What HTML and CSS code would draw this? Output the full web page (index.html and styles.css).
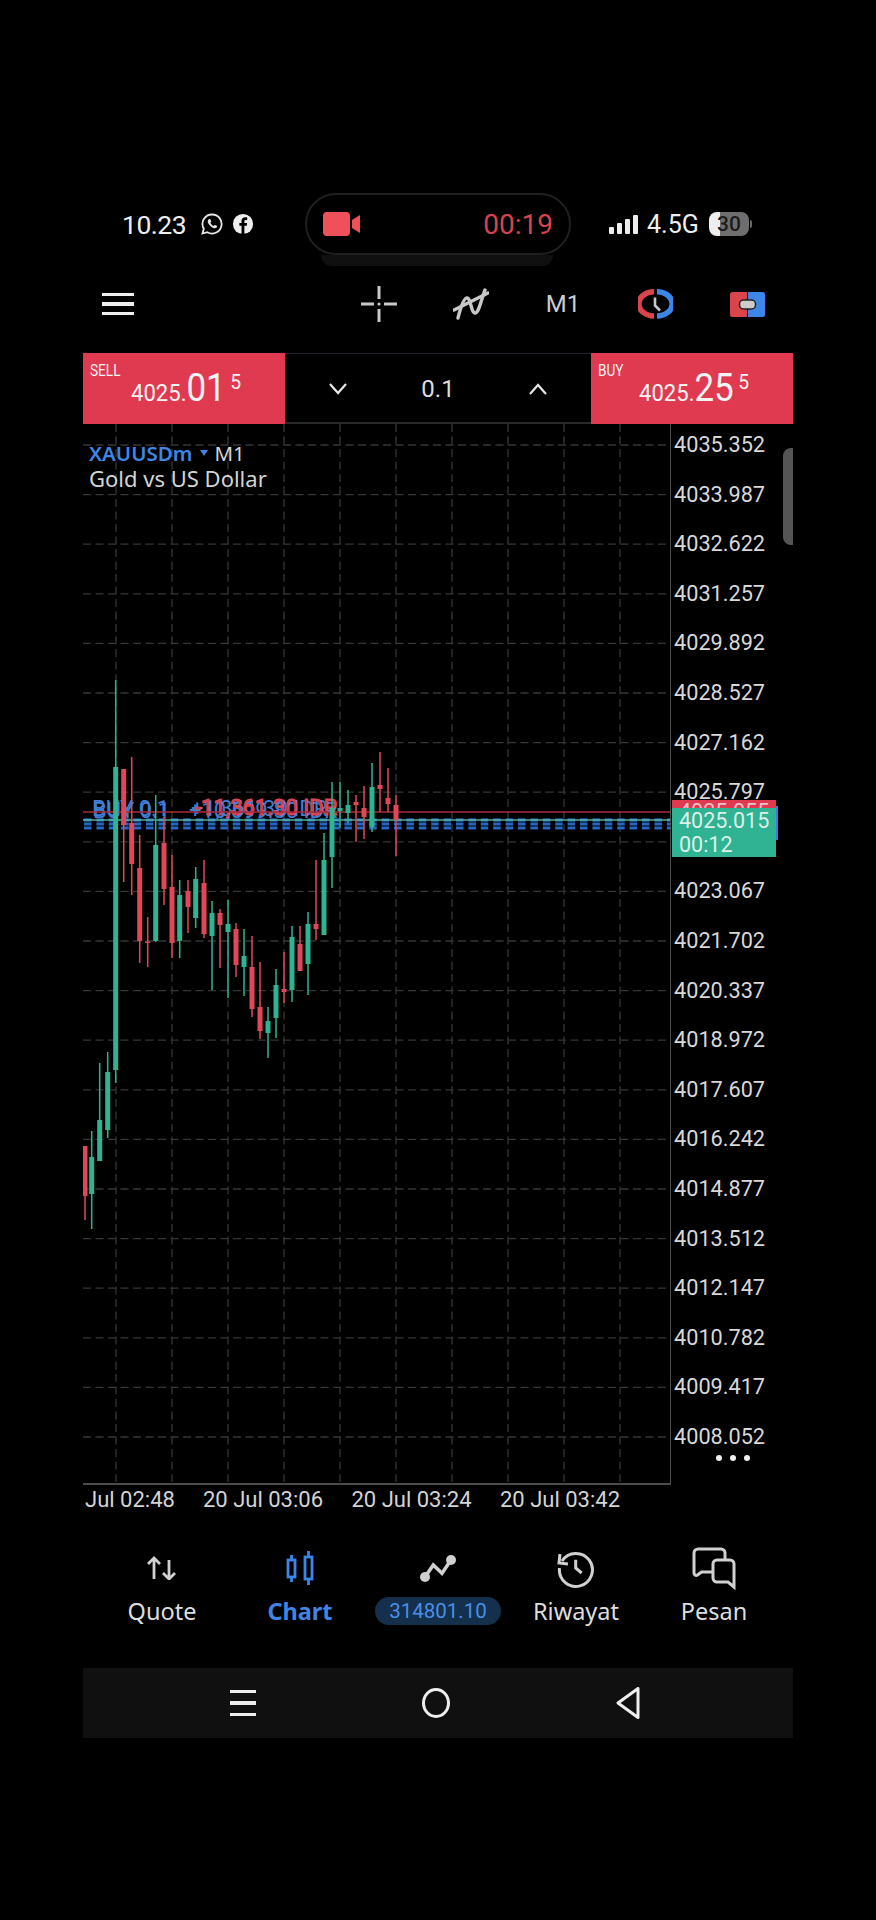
FILE: index.html
```html
<!DOCTYPE html>
<html lang="en">
<head>
  <meta charset="UTF-8">
  <title>XAUUSDm Chart</title>
  <link rel="stylesheet" href="styles.css">
</head>
<body>
  <div class="phone">

    <div class="statusbar">
      <div class="status-left">
        <span class="clock">10.23</span>
        <svg class="ic-wa" viewBox="0 0 24 24"><path d="M12 2.5a9.5 9.5 0 0 0-8.2 14.3L2.5 21.5l4.8-1.3A9.5 9.5 0 1 0 12 2.5z" fill="none" stroke="#e6e6e6" stroke-width="1.8"/><path d="M8.6 7.4c-.6.6-1 1.5-.8 2.6.4 2.2 3.6 5.7 6.3 6.3 1.1.2 2-.2 2.6-.8.4-.5.5-1 .4-1.4l-2-1c-.3-.1-.6 0-.8.2l-.6.7c-1.4-.6-2.7-1.8-3.3-3.2l.6-.7c.2-.2.3-.5.2-.8l-.9-2c-.5-.2-1.3-.4-1.7.1z" fill="#e6e6e6"/></svg>
        <svg class="ic-fb" viewBox="0 0 24 24"><circle cx="12" cy="12" r="11" fill="#eee"/><path d="M13.5 23v-9.2h2.6l.4-3h-3V9c0-.9.3-1.5 1.5-1.5h1.6V4.8c-.3 0-1.2-.1-2.3-.1-2.3 0-3.9 1.4-3.9 4v2.1H8v3h2.4V23z" fill="#000"/></svg>
      </div>
      <div class="rec-pill">
        <svg class="ic-cam" viewBox="0 0 37 24"><rect width="27" height="24" rx="4" fill="#f0505a"/><path d="M29 8l8-5v18l-8-5z" fill="#f0505a"/></svg>
        <span class="rec-time">00:19</span>
      </div>
      <div class="status-right">
        <div class="signal"><i class="b1"></i><i class="b2"></i><i class="b3"></i><i class="b4"></i></div>
        <span class="net">4.5G</span>
        <div class="battery"><span>30</span></div>
        <i class="battery-tip"></i>
      </div>
    </div>

    <div class="toolbar">
      <div class="hamburger"><i></i><i></i><i></i></div>
      <div class="tools">
        <div class="tool">
          <svg width="36" height="36" viewBox="0 0 36 36" fill="none" stroke="#c8c8c8" stroke-width="3"><path d="M0 18h13M23 18h13M18 0v13M18 23v13"/><circle cx="18" cy="18" r="1.6" fill="#c8c8c8" stroke="none"/></svg>
        </div>
        <div class="tool">
          <svg width="36" height="32" viewBox="0 0 36 32" fill="none" stroke="#c8c8c8" stroke-width="3.4" stroke-linecap="round"><path d="M5 30C8 18 11 10 14 10c4 0 4 15 8 15 4 0 6-13 10-23"/><path d="M1 22L35 5"/></svg>
        </div>
        <div class="tool tool-text">M1</div>
        <div class="tool">
          <svg width="35" height="30" viewBox="0 0 35 30" fill="none" stroke-width="5.5"><path d="M16 2.700A15 12 0 0 0 16 27" stroke="#d9454a"/><path d="M19 2.700A15 12 0 0 1 19 27" stroke="#3b86e8"/><path d="M17 8.500v8l5 5" stroke="#c8c8c8" stroke-width="2.6"/></svg>
        </div>
        <div class="tool">
          <svg width="35" height="25" viewBox="0 0 35 25"><path d="M2.500 0H17v25H2.500A2.500 2.500 0 0 1 0 22.500v-20A2.500 2.500 0 0 1 2.500 0z" fill="#d9454a"/><path d="M18 0h14.500A2.500 2.500 0 0 1 35 2.500v20a2.500 2.500 0 0 1-2.500 2.500H18z" fill="#3b86e8"/><rect x="9.500" y="8" width="16" height="9" rx="4" fill="#ccc" stroke="#222" stroke-width="1.500"/></svg>
        </div>
      </div>
    </div>

    <div class="tradebar">
      <div class="quote-btn">
        <div class="side">SELL</div>
        <div class="price"><span class="p-small">4025.</span><span class="p-big">01</span><span class="p-sup">5</span></div>
      </div>
      <div class="volume">
        <svg width="18" height="12" viewBox="0 0 18 12" fill="none" stroke="#e6e6e6" stroke-width="2.2"><path d="M1 1l8 9 8-9"/></svg>
        <span>0.1</span>
        <svg width="18" height="12" viewBox="0 0 18 12" fill="none" stroke="#e6e6e6" stroke-width="2.2"><path d="M1 11l8-9 8 9"/></svg>
      </div>
      <div class="quote-btn">
        <div class="side">BUY</div>
        <div class="price"><span class="p-small">4025.</span><span class="p-big">25</span><span class="p-sup">5</span></div>
      </div>
    </div>

    <div class="chart">
      <div class="plot">
        <svg class="plot-svg" width="587" height="1059" viewBox="83 424 587 1059">
          <!-- grid -->
          <path class="grid" d="M83 445H670M83 494.6H670M83 544.2H670M83 593.8H670M83 643.4H670M83 693H670M83 742.6H670M83 792.2H670M83 841.8H670M83 891.4H670M83 941H670M83 990.6H670M83 1040.2H670M83 1089.8H670M83 1139.4H670M83 1189H670M83 1238.6H670M83 1288.2H670M83 1337.8H670M83 1387.4H670M83 1437H670"/>
          <path class="grid" d="M116 424V1483M172 424V1483M228 424V1483M284 424V1483M340 424V1483M396 424V1483M452 424V1483M508 424V1483M564 424V1483M620 424V1483"/>

          <!-- open positions, they stack on top of each other -->
          <text class="order blue" x="92" y="816">BUY 0.1</text>
          <text class="order blue" x="93" y="818">BUY 0.1</text>
          <text class="order blue" x="189" y="818">+10,599.80 IDR</text>
          <text class="order blue" x="191" y="816">+1,361.30 IDR</text>
          <text class="order red" x="195" y="815">-11,361.30 IDR</text>

          <path class="dashes" d="M84 820H670"/>
          <path class="dashes dim" d="M84 824H670M84 828H670"/>
          <path class="line-ask" d="M83 812H670"/>
          <path class="line-bid" d="M83 820H670"/>

          <!-- candles -->
          <path class="wick green" d="M115.7 680V1083M91.7 1131V1229M99.7 1063V1160M107.7 1052V1138M155.7 795V942M179.7 880V958M195.7 867V928M212 901V990M228 900V998M244 929V996M268 1007V1058M276 969V1038M292 926V1002M308 912V995M324 833V935M332 782V888M340 782V828M348 790V823M372 763V832"/>
          <path class="body green" d="M115.7 767V1070M91.7 1157V1194M99.7 1120V1161M107.7 1072V1130M155.7 845V941M179.7 895V941M195.7 879V918M212 913V936M228 924V932M244 956V967M268 1021V1033M276 985V1018M292 937V990M308 924V964M324 860V935M332 808V857M340 808V811M348 805V813M372 787V827"/>
          <path class="wick red" d="M85 1146V1220M123.7 769V882M131.7 757V895M139.7 835V963M147.7 917V967M164 817V905M172 855V958M188 880V933M204 860V938M220 909V968M236 923V977M252 936V1017M260 962V1039M284 952V1003M300 926V971M316 860V940M356 795V842M364 786V839M380 752V812M388 768V812M396 795V856"/>
          <path class="body red" d="M85 1146V1196M123.7 769V825M131.7 823V864M139.7 868V941M147.7 941.500V943M164 843V889M172 887V943M188 891V907M204 883V934M220 913V925M236 929V965M252 967V1009M260 1007V1031M284 989V992M300 944V971M316 924V929M356 802V805M364 808V817M380 785V789M388 798V804M396 805V820"/>
        </svg>
        <div class="symbol">
          <div class="symbol-row"><span class="symbol-name">XAUUSDm</span><i class="symbol-arrow"></i><span>M1</span></div>
          <div class="symbol-desc">Gold vs US Dollar</div>
        </div>
      </div>

      <div class="axis">
        <span>4035.352</span><span>4033.987</span><span>4032.622</span><span>4031.257</span><span>4029.892</span><span>4028.527</span><span>4027.162</span><span>4025.797</span><span>4024.432</span><span>4023.067</span><span>4021.702</span><span>4020.337</span><span>4018.972</span><span>4017.607</span><span>4016.242</span><span>4014.877</span><span>4013.512</span><span>4012.147</span><span>4010.782</span><span>4009.417</span><span>4008.052</span>
      </div>

      <div class="tag-ask">4025.055</div>
      <i class="tag-edge"></i>
      <div class="tag-bid">4025.015<br>00:12</div>
      <i class="scroll-handle"></i>
      <div class="more-dots"><i></i><i></i><i></i></div>
    </div>

    <div class="timeaxis">
      <span class="first">Jul 02:48</span>
      <span>20 Jul 03:06</span>
      <span>20 Jul 03:24</span>
      <span>20 Jul 03:42</span>
    </div>

    <div class="tabs">
      <div class="tab">
        <div class="tab-icon"><svg width="30" height="24" viewBox="0 0 30 24" fill="none" stroke="#d0d0d0" stroke-width="2.8"><path d="M7 23V2M1 8l6-6 6 6"/><path d="M22 4v19M16 17l6 6 6-6"/></svg></div>
        <span>Quote</span>
      </div>
      <div class="tab active">
        <div class="tab-icon"><svg width="28" height="36" viewBox="0 0 28 36" fill="none" stroke="#3b86e8" stroke-width="2.8"><rect x="2" y="10" width="7" height="17"/><path d="M5.500 5v5M5.500 27v5"/><rect x="19" y="7" width="7" height="22"/><path d="M22.500 1v6M22.500 29v6"/></svg></div>
        <span>Chart</span>
      </div>
      <div class="tab">
        <div class="tab-icon"><svg width="36" height="30" viewBox="0 0 36 30" fill="none" stroke="#d0d0d0" stroke-width="3.5"><path d="M5 24l8.300-12 8.700 8.300L31 7"/><circle cx="5" cy="24" r="5" fill="#d0d0d0" stroke="none"/><circle cx="31" cy="7" r="5" fill="#d0d0d0" stroke="none"/></svg></div>
        <span class="balance">314801.10</span>
      </div>
      <div class="tab">
        <div class="tab-icon"><svg width="40" height="40" viewBox="0 0 40 40" fill="none" stroke="#d0d0d0" stroke-width="3"><path d="M6 13A16.500 16.500 0 1 1 3.500 20"/><path d="M4 6l-1 9 9 1"/><path d="M19.700 11.700V20l6 5"/></svg></div>
        <span>Riwayat</span>
      </div>
      <div class="tab">
        <div class="tab-icon"><svg width="46" height="46" viewBox="0 0 46 46" fill="none" stroke="#d0d0d0" stroke-width="3"><path d="M34 14V8a4 4 0 0 0-4-4H7a4 4 0 0 0-4 4v20c0 2 2 3 3.500 2l4-3h11"/><path d="M26 15h13a4 4 0 0 1 4 4v23l-6-5H26a4 4 0 0 1-4-4V19a4 4 0 0 1 4-4z"/></svg></div>
        <span>Pesan</span>
      </div>
    </div>

    <div class="sysnav">
      <div class="sys-menu"><i></i><i></i><i></i></div>
      <i class="sys-home"></i>
      <svg width="24" height="32" viewBox="0 0 24 32" fill="none" stroke="#eee" stroke-width="3" stroke-linejoin="round"><path d="M22 1.500v29L2 16z"/></svg>
    </div>

  </div>
</body>
</html>
```

FILE: styles.css
```css
* {
  box-sizing: border-box;
}

body {
  margin: 0;
  background: #000;
  font-family: Roboto, sans-serif;
  color: #ddd;
}

.phone {
  width: 710px;
  margin-left: 83px;
  padding-top: 193px;
}

/* status bar */
.statusbar {
  display: flex;
  height: 62px;
}

.status-left {
  width: 222px;
  padding-left: 39px;
  display: flex;
  align-items: center;
}

.clock {
  font-size: 26.500px;
  color: #eee;
  width: 78px;
  letter-spacing: -0.5px;
}

.ic-wa {
  width: 24px;
  height: 24px;
}

.ic-fb {
  width: 22px;
  height: 22px;
  margin-left: 8px;
}

.rec-pill {
  position: relative;
  width: 266px;
  border: 2px solid #1f1f1f;
  border-radius: 31px;
  padding: 0 16px;
  display: flex;
  align-items: center;
  justify-content: space-between;
}

.rec-pill::after {
  content: "";
  position: absolute;
  left: 14px;
  right: 16px;
  top: 60px;
  height: 11px;
  background: #101010;
  border-radius: 0 0 14px 14px;
}

.ic-cam {
  width: 37px;
  height: 24px;
}

.rec-time {
  font-size: 28px;
  color: #d8434f;
}

.status-right {
  padding-left: 38px;
  display: flex;
  align-items: center;
}

.signal {
  display: flex;
  align-items: flex-end;
  gap: 3px;
  height: 19px;
}

.signal i {
  width: 5px;
  background: #eee;
  border-radius: 1px;
}

.signal .b1 { height: 7px; }
.signal .b2 { height: 11px; }
.signal .b3 { height: 15px; }
.signal .b4 { height: 19px; }

.net {
  font-size: 25px;
  color: #eee;
  margin-left: 9px;
  width: 62px;
}

.battery {
  width: 40px;
  height: 24px;
  border-radius: 8px;
  background: linear-gradient(90deg, #eee 0 28%, #6e6e6e 28%);
  font-size: 21px;
  font-weight: 500;
  color: #1c1c1c;
  text-align: center;
  line-height: 24px;
}

.battery-tip {
  width: 2px;
  height: 8px;
  margin-left: 1px;
  background: #666;
  border-radius: 0 2px 2px 0;
}

/* toolbar */
.toolbar {
  height: 98px;
  padding-left: 19px;
  display: flex;
  align-items: center;
  justify-content: space-between;
}

.hamburger {
  width: 32px;
  display: flex;
  flex-direction: column;
  gap: 6px;
}

.hamburger i {
  height: 3.500px;
  background: #eee;
}

.tools {
  display: flex;
}

.tool {
  width: 92px;
  display: flex;
  align-items: center;
  justify-content: center;
}

.tool-text {
  font-size: 24px;
  color: #ccc;
}

/* sell / volume / buy */
.tradebar {
  display: flex;
  height: 71px;
}

.quote-btn {
  width: 202px;
  background: #e03a50;
  padding: 8px 0 0 7px;
  color: #f4f4f4;
}

.side {
  font-size: 16px;
  line-height: 20px;
  transform: scaleX(0.85);
  transform-origin: left;
}

.price {
  margin-left: 41px;
  margin-top: -15px;
  white-space: nowrap;
  transform: scaleX(0.92);
  transform-origin: left;
}

.p-small {
  font-size: 24px;
}

.p-big {
  font-size: 38px;
}

.p-sup {
  font-size: 21px;
  vertical-align: 12px;
  margin-left: 5px;
}

.volume {
  width: 306px;
  padding: 2px 44px 0;
  border-top: 1px solid #22222c;
  border-bottom: 2px solid #2a2a2a;
  display: flex;
  align-items: center;
  justify-content: space-between;
  font-size: 24px;
  color: #ddd;
}

/* chart */
.chart {
  position: relative;
  display: flex;
  height: 1061px;
}

.plot {
  position: relative;
  width: 588px;
  height: 1061px;
  border-right: 1.500px solid #4c4c4c;
  border-bottom: 2px solid #4c4c4c;
}

.plot-svg {
  display: block;
}

.grid {
  fill: none;
  stroke: #363636;
  stroke-width: 1.300;
  stroke-dasharray: 8 4.500;
}

.order {
  font-size: 22px;
  font-family: Roboto, sans-serif;
}

.order.blue {
  fill: #3f7fd6;
}

.order.red {
  fill: #c9384a;
}

.dashes {
  fill: none;
  stroke: #3182ea;
  stroke-width: 3;
  stroke-dasharray: 7.500 4.900;
}

.dashes.dim {
  stroke: #2567c4;
}

.line-ask {
  stroke: #a82a38;
  stroke-width: 1.500;
}

.line-bid {
  stroke: #4fae9a;
  stroke-width: 1.500;
}

.wick {
  fill: none;
  stroke-width: 1.500;
}

.body {
  fill: none;
  stroke-width: 5;
}

.green {
  stroke: #2fb392;
}

.red {
  stroke: #e0485a;
}

.symbol {
  position: absolute;
  left: 6px;
  top: 16px;
  font-family: "Noto Sans", sans-serif;
  font-size: 20.500px;
  line-height: 26px;
  color: #d4d4d4;
}

.symbol-row {
  display: flex;
  align-items: center;
}

.symbol-name {
  color: #3f86e4;
  font-weight: 600;
}

.symbol-arrow {
  width: 0;
  height: 0;
  margin: 0 6px 0 8px;
  border-left: 4px solid transparent;
  border-right: 4px solid transparent;
  border-top: 6px solid #3f86e4;
}

.symbol-desc {
  font-size: 22px;
  line-height: 24px;
}

.axis {
  flex: 1;
  padding: 9px 0 0 3px;
  display: flex;
  flex-direction: column;
  gap: 25.600px;
  font-size: 21.700px;
  line-height: 24px;
  color: #d8d8d8;
}

.tag-ask {
  position: absolute;
  left: 589px;
  top: 376px;
  width: 104px;
  height: 14px;
  padding-left: 7px;
  overflow: hidden;
  background: #e03a50;
  font-size: 21.500px;
  line-height: 24px;
  color: #f0c0c8;
}

.tag-edge {
  position: absolute;
  left: 693px;
  top: 382px;
  width: 2px;
  height: 34px;
  background: #2f7fe6;
}

.tag-bid {
  position: absolute;
  left: 589px;
  top: 384px;
  width: 104px;
  height: 49px;
  padding: 1px 0 0 7px;
  background: #2fb392;
  font-size: 21.500px;
  line-height: 24px;
  color: #dff0ea;
}

.scroll-handle {
  position: absolute;
  right: 0;
  top: 24px;
  width: 10px;
  height: 97px;
  background: #555;
  border-radius: 8px 0 0 8px;
}

.more-dots {
  position: absolute;
  left: 633px;
  top: 1031px;
  display: flex;
  gap: 8px;
}

.more-dots i {
  width: 6px;
  height: 6px;
  border-radius: 50%;
  background: #eee;
}

/* date row */
.timeaxis {
  display: flex;
  height: 30px;
  padding-left: 2px;
  font-size: 22px;
  line-height: 30px;
  color: #d4d4d4;
  white-space: nowrap;
}

.timeaxis span {
  width: 148.500px;
}

.timeaxis .first {
  width: 118px;
}

/* bottom tabs */
.tabs {
  display: flex;
  padding: 28px 0 0 10px;
}

.tab {
  width: 138px;
  display: flex;
  flex-direction: column;
  align-items: center;
  gap: 4px;
  font-family: "Noto Sans", sans-serif;
  font-size: 23.500px;
  line-height: 28px;
  color: #ddd;
}

.tab-icon {
  height: 50px;
  display: flex;
  align-items: center;
}

.tab.active {
  color: #3f86e4;
  font-weight: 700;
}

.balance {
  width: 126px;
  text-align: center;
  background: #14304c;
  border-radius: 14px;
  color: #4a8fe6;
  font-family: Roboto, sans-serif;
  font-size: 20.500px;
}

/* android nav */
.sysnav {
  margin-top: 43px;
  height: 70px;
  background: #101010;
  padding-left: 147px;
  display: flex;
  align-items: center;
  gap: 166px;
}

.sys-menu {
  width: 26px;
  display: flex;
  flex-direction: column;
  gap: 8px;
}

.sys-menu i {
  height: 3.500px;
  background: #eee;
}

.sys-home {
  width: 28px;
  height: 30px;
  border: 3px solid #eee;
  border-radius: 50%;
}
```
